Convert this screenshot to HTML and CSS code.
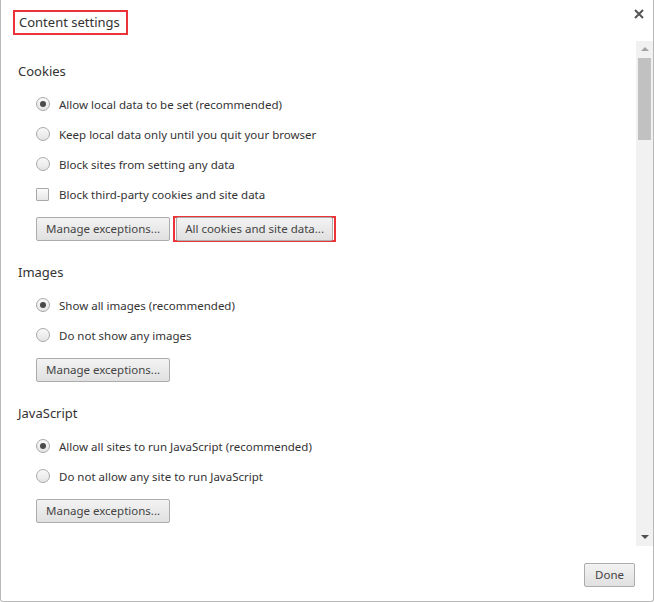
FILE: index.html
```html
<!DOCTYPE html>
<html>
<head>
<meta charset="utf-8">
<link rel="stylesheet" href="styles.css">
</head>
<body>
<div class="dialog">
  <div class="header">
    <h1 class="title"><span class="hl">Content settings</span></h1>
    <button class="close" aria-label="Close">
      <svg width="10" height="10" viewBox="0 0 10 10"><path d="M1 1 L9 9 M9 1 L1 9" stroke="#555" stroke-width="2" fill="none"/></svg>
    </button>
  </div>
  <div class="main">
    <div class="content">
      <section class="sec">
        <h2 class="sec-title">Cookies</h2>
        <div class="row"><span class="radio checked"></span><span class="label">Allow local data to be set (recommended)</span></div>
        <div class="row"><span class="radio"></span><span class="label">Keep local data only until you quit your browser</span></div>
        <div class="row"><span class="radio"></span><span class="label">Block sites from setting any data</span></div>
        <div class="row"><span class="check"></span><span class="label">Block third-party cookies and site data</span></div>
        <div class="btns">
          <button class="btn">Manage exceptions...</button>
          <span class="hlbtn"><button class="btn">All cookies and site data...</button></span>
        </div>
      </section>
      <section class="sec">
        <h2 class="sec-title">Images</h2>
        <div class="row"><span class="radio checked"></span><span class="label">Show all images (recommended)</span></div>
        <div class="row"><span class="radio"></span><span class="label">Do not show any images</span></div>
        <div class="btns"><button class="btn">Manage exceptions...</button></div>
      </section>
      <section class="sec">
        <h2 class="sec-title">JavaScript</h2>
        <div class="row"><span class="radio checked"></span><span class="label">Allow all sites to run JavaScript (recommended)</span></div>
        <div class="row"><span class="radio"></span><span class="label">Do not allow any site to run JavaScript</span></div>
        <div class="btns"><button class="btn">Manage exceptions...</button></div>
      </section>
    </div>
    <div class="scrollbar">
      <span class="arrow up"></span>
      <span class="thumb"></span>
      <span class="spacer"></span>
      <span class="arrow down"></span>
    </div>
  </div>
  <div class="footer">
    <button class="btn done">Done</button>
  </div>
</div>
</body>
</html>
```
FILE: styles.css
```css
* { box-sizing: border-box; }
html, body { margin: 0; padding: 0; background: #fff; }
body {
  font-family: "Noto Sans", "Open Sans", sans-serif;
  color: #333;
}
.dialog {
  width: 654px;
  height: 602px;
  border: 1px solid #b9b9b9;
  border-top: none;
  border-radius: 0 0 3px 3px;
  display: flex;
  flex-direction: column;
  background: #fff;
}
.header {
  height: 41px;
  display: flex;
  align-items: flex-start;
  justify-content: space-between;
  padding: 10px 9px 0 12px;
}
.title {
  margin: 0;
  font-size: 13px;
  font-weight: normal;
  line-height: 20px;
}
.hl {
  display: inline-block;
  border: 2px solid #ea3438;
  padding: 0 6px 0 4px;
  height: 25px;
  line-height: 20px;
}
.close {
  border: none;
  background: none;
  padding: 0;
  margin-top: -1px;
  width: 10px;
  height: 10px;
  line-height: 0;
}
.main {
  height: 505px;
  display: flex;
}
.content {
  flex: 1;
  padding: 20px 0 0 17px;
  overflow: hidden;
}
.sec { margin-bottom: 21px; }
.sec-title {
  margin: 0 0 8px;
  font-size: 13px;
  font-weight: normal;
  line-height: 20px;
  color: #333;
}
.row {
  height: 30px;
  display: flex;
  align-items: center;
  padding-left: 18px;
}
.label {
  font-size: 11.5px;
  color: #333;
  margin-left: 9px;
}
.radio {
  width: 14px;
  height: 14px;
  border-radius: 50%;
  border: 1px solid #a9a9a9;
  background: linear-gradient(#f9f9f9, #e4e4e4);
  display: flex;
  align-items: center;
  justify-content: center;
}
.radio.checked::after {
  content: "";
  width: 6px;
  height: 6px;
  border-radius: 50%;
  background: #4a4a4a;
}
.check {
  width: 13px;
  height: 13px;
  border: 1px solid #a9a9a9;
  border-radius: 1px;
  background: linear-gradient(#fbfbfb, #e6e6e6);
  margin-right: 1px;
}
.btns {
  display: flex;
  align-items: center;
  padding-left: 18px;
  margin-top: 8px;
  gap: 3px;
}
.btn {
  font-family: inherit;
  font-size: 11.5px;
  color: #444;
  height: 24px;
  padding: 0 9px;
  border: 1px solid #acacac;
  border-radius: 2px;
  background: linear-gradient(#f3f3f3, #e0e0e0);
  line-height: 20px;
}
.hlbtn .btn { padding: 0 8px; }
.hlbtn {
  display: inline-flex;
  border: 2px solid #ea3438;
  padding: 0 1px;
  height: 26px;
  align-items: center;
  margin: -1px 0;
}
.scrollbar {
  width: 17px;
  background: #f1f1f1;
  display: flex;
  flex-direction: column;
  align-items: center;
  padding: 0 1px;
}
.arrow {
  width: 0;
  height: 0;
  border-left: 4px solid transparent;
  border-right: 4px solid transparent;
}
.arrow.up { border-bottom: 4px solid #a3a3a3; margin: 6px 0 7px; }
.arrow.down { border-top: 4px solid #505050; margin: 0 0 7px; }
.thumb {
  width: 13px;
  height: 82px;
  background: #c1c1c1;
}
.spacer { flex: 1; }
.footer {
  flex: 1;
  display: flex;
  justify-content: flex-end;
  align-items: flex-start;
  padding: 17px 18px 0 0;
}
.done { padding: 0 10px; }
```
